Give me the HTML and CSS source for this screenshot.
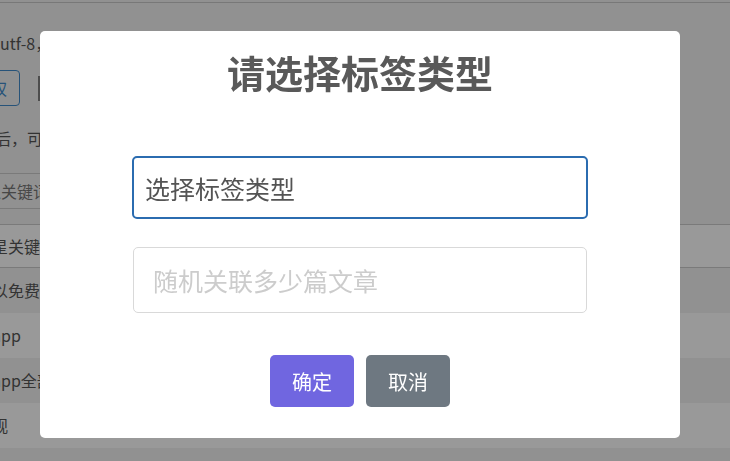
FILE: index.html
```html
<!DOCTYPE html>
<html>
<head>
    <meta charset="utf-8">
    <title>标签管理</title>
    <link rel="stylesheet" href="styles.css">
</head>
<body>
    <div class="topbar"></div>

    <div class="content">
        <p class="note">编码为utf-8，导入前请确认文件格式</p>
        <div class="actions">
            <button class="btn-outline">授权</button>
            <span class="btn-dark"></span>
        </div>
        <p class="note tip">修改完后，可以在列表中查看结果</p>
        <input type="text" class="search" placeholder="输入关键词">

        <table class="list">
            <thead>
                <tr><th>热门星关键词</th></tr>
            </thead>
            <tbody>
                <tr><td>都可以免费下载</td></tr>
                <tr><td>下载app</td></tr>
                <tr><td>安装app全部文章</td></tr>
                <tr><td>很乐观</td></tr>
            </tbody>
        </table>
    </div>

    <div class="overlay">
        <div class="modal">
            <h2 class="modal-title">请选择标签类型</h2>
            <input type="text" class="field field-active" value="选择标签类型">
            <input type="text" class="field field-count" placeholder="随机关联多少篇文章">
            <div class="modal-actions">
                <button class="btn btn-confirm">确定</button>
                <button class="btn btn-cancel">取消</button>
            </div>
        </div>
    </div>
</body>
</html>
```

FILE: styles.css
```css
body {
    margin: 0;
    background: #f2f2f2;
    font-family: "Microsoft YaHei", "Noto Sans CJK SC", sans-serif;
    font-size: 16px;
    color: #555;
    overflow: hidden;
}
.topbar {
    height: 2px;
    border-bottom: 1px solid #c8c8c8;
}
.content {
    margin-left: -48px;
}
.note {
    margin: 0;
    line-height: 24px;
}
.content > .note:first-child {
    margin-top: 28px;
}
.tip {
    margin-top: 20px;
    margin-left: -5px;
}
.actions {
    display: flex;
    align-items: center;
    margin-top: 15px;
    padding-left: 10px;
}
.btn-outline {
    height: 36px;
    padding: 0 12px;
    border: 1px solid #428bca;
    border-radius: 4px;
    background: transparent;
    color: #428bca;
    font-family: inherit;
    font-size: 16px;
}
.btn-dark {
    width: 60px;
    height: 25px;
    margin-left: 18px;
    background: #808080;
}
.search {
    display: block;
    box-sizing: border-box;
    width: 320px;
    height: 36px;
    margin-top: 23px;
    padding: 0 17px;
    border: none;
    border-top: 1px solid #cbcbcb;
    border-bottom: 1px solid #cbcbcb;
    background: transparent;
    font-family: inherit;
    font-size: 16px;
}
.search::placeholder {
    color: #777;
}
.list {
    width: 100%;
    margin-top: 15px;
    border-collapse: separate;
    border-spacing: 0;
}
.list th {
    padding: 10px 8px;
    line-height: 22px;
    border-top: 1px solid #cbcbcb;
    border-bottom: 1px solid #cbcbcb;
    background: #fff;
    font-weight: normal;
    text-align: left;
    color: #555;
}
.list td {
    padding: 10px 8px;
    line-height: 25px;
    background: #fff;
}
.list tbody tr:nth-child(odd) td {
    background: #f2f2f2;
}

.overlay {
    position: fixed;
    top: 0;
    left: 0;
    right: 0;
    bottom: 0;
    background: rgba(0, 0, 0, 0.4);
}
.modal {
    box-sizing: border-box;
    width: 640px;
    margin: 31px 0 0 40px;
    padding: 18px 0 31px;
    background: #fff;
    border-radius: 5px;
    text-align: center;
}
.modal-title {
    margin: 0;
    font-size: 38px;
    line-height: 46px;
    font-weight: 700;
    color: #595959;
}
.field {
    display: block;
    box-sizing: border-box;
    margin: 0 auto;
    border-radius: 5px;
    font-family: inherit;
    font-size: 25px;
    color: #545454;
    outline: none;
}
.field-active {
    width: 456px;
    height: 63px;
    margin-top: 61px;
    padding: 0 11px;
    border: 2px solid #2b6cb0;
}
.field-count {
    width: 454px;
    height: 66px;
    margin-top: 28px;
    padding: 0 19px;
    border: 1px solid #d9d9d9;
}
.field-count::placeholder {
    color: #ccc;
}
.modal-actions {
    display: flex;
    justify-content: center;
    gap: 12px;
    margin-top: 42px;
}
.btn {
    width: 84px;
    height: 52px;
    padding: 0;
    border: none;
    border-radius: 5px;
    color: #fff;
    font-family: inherit;
    font-size: 20px;
    cursor: pointer;
}
.btn-confirm {
    background-color: #7066e0;
}
.btn-cancel {
    background-color: #6e7881;
}
```
